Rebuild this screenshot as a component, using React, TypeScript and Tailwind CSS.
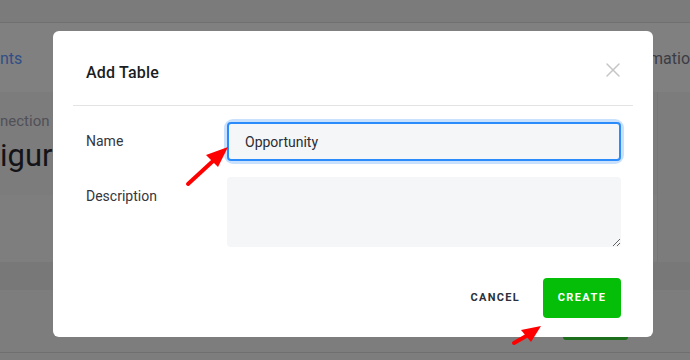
import { X } from 'lucide-react'

const font = { fontFamily: 'Roboto, "Liberation Sans", sans-serif' }

function Backdrop() {
  return (
    <div className="flex h-full w-full flex-col bg-[#7f7f7f]">
      <div className="h-[23px] shrink-0 border-b border-[#707070] bg-[#7b7b7b]" />
      <div className="flex h-[69px] shrink-0 items-center justify-between overflow-hidden bg-[#808080] pt-[2px]">
        <span className="text-[16px] text-[#2f4f86]">nts</span>
        <span className="text-[16px] text-[#3c3c44]">matio</span>
      </div>
      <div className="flex shrink-0">
        <div className="flex h-[103px] flex-1 flex-col bg-[#7c7c7c] pt-[20px]">
          <span className="text-[15px] leading-[18px] text-[#505058]">nection</span>
          <span className="mt-[6px] text-[31px] leading-[40px] text-[#141418]">igur</span>
        </div>
        <div className="w-[33px] border-l border-[#767676] bg-[#7c7c7c]" />
      </div>
      <div className="flex h-[67px] shrink-0">
        <div className="flex-1 bg-[#7e7e7e]" />
        <div className="w-[33px] border-l border-[#767676] bg-[#7c7c7c]" />
      </div>
      <div className="h-[28px] shrink-0 bg-[#787878]" />
      <div className="flex h-[62px] shrink-0 justify-end bg-[#7d7d7d] pr-[62px] pt-[34px]">
        <div className="h-[16px] w-[65px] rounded-b-[3px] bg-[#1c6e1c]" />
      </div>
      <div className="flex-1 border-t border-[#6f6f6f] bg-[#7d7d7d]" />
    </div>
  )
}

function Modal() {
  return (
    <div className="absolute left-[53px] top-[31px] flex h-[306px] w-[600px] flex-col rounded-[6px] bg-white">
      <div className="flex h-[74px] shrink-0 items-start justify-between pl-[33px] pr-[28px]">
        <h2 className="mt-[30px] text-[16px] font-medium leading-[24px] tracking-[0.2px] text-[#1b1d22]">
          Add Table
        </h2>
        <X size={24} strokeWidth={1.5} className="mt-[27px] text-[#c6c6c6]" />
      </div>
      <div className="mx-[20px] h-px bg-[#e4e4e6]" />

      <div className="flex flex-col gap-[16px] pl-[33px] pr-[32px] pt-[16px]">
        <div className="flex items-center">
          <label className="w-[141px] text-[14px] text-[#33363d]">Name</label>
          <div className="flex-1 rounded-[6px] ring-[3px] ring-[#c9e1fd]">
            <input
              readOnly
              value="Opportunity"
              className="h-[39px] w-full rounded-[4px] border-2 border-[#2b8bfb] bg-[#f5f6f8] pl-[16px] text-[14px] text-[#2a2d33] outline-none"
              style={font}
            />
          </div>
        </div>
        <div className="flex items-start">
          <label className="w-[141px] pt-[9px] text-[14px] text-[#33363d]">Description</label>
          <textarea
            readOnly
            className="h-[70px] flex-1 resize-y rounded-[4px] bg-[#f5f6f8] outline-none"
            style={font}
          />
        </div>
      </div>

      <div className="flex justify-end gap-[7px] pr-[32px] pt-[31px]">
        <button className="h-[40px] px-[16px] text-[11px] font-bold tracking-[1.3px] text-[#2b303b]">
          CANCEL
        </button>
        <button className="h-[40px] w-[78px] rounded-[4px] bg-[#05be08] text-[11px] font-bold tracking-[1.4px] text-white">
          CREATE
        </button>
      </div>
    </div>
  )
}

function Arrows() {
  return (
    <svg className="pointer-events-none absolute left-0 top-0" width="690" height="360" viewBox="0 0 690 360">
      <line x1="188" y1="184" x2="213" y2="161" stroke="#ff0000" strokeWidth="4" strokeLinecap="round" />
      <polygon points="228,147 206,155 218,167" fill="#ff0000" />
      <line x1="514" y1="343" x2="528" y2="335" stroke="#ff0000" strokeWidth="4" strokeLinecap="round" />
      <polygon points="541,326 521,330 531,342" fill="#ff0000" />
    </svg>
  )
}

export default function App() {
  return (
    <div className="relative h-[360px] w-[690px] overflow-hidden" style={font}>
      <Backdrop />
      <Modal />
      <Arrows />
    </div>
  )
}
